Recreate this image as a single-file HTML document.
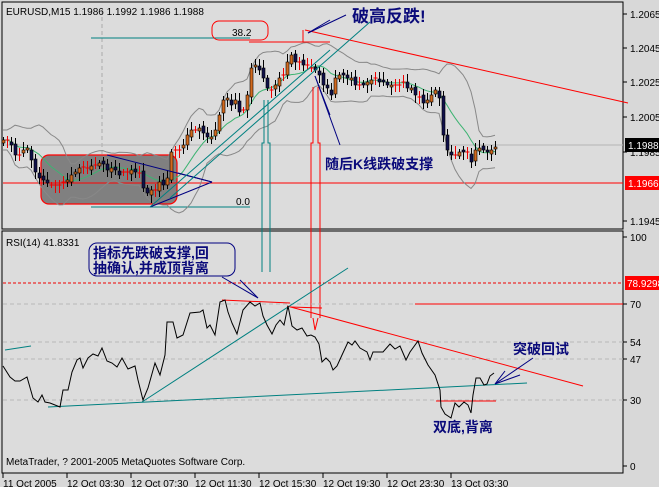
<!DOCTYPE html>
<html><head><meta charset="utf-8"><style>
html,body{margin:0;padding:0;background:#d8d8d8;}
svg{display:block;font-family:"Liberation Sans","Noto Sans CJK SC",sans-serif;}
.ax{font-size:10px;fill:#000;}
.cn{font-family:"Liberation Sans","Noto Sans CJK SC",sans-serif;font-weight:bold;fill:#0a0a7a;}
</style></head><body>
<svg id="s" width="659" height="487" viewBox="0 0 659 487" xmlns="http://www.w3.org/2000/svg">
<rect width="659" height="487" fill="#d8d8d8"/>
<rect x="2" y="2" width="621" height="227" fill="#dcdcdc" stroke="#000" stroke-width="1"/>
<rect x="2" y="231" width="621" height="242" fill="#dcdcdc" stroke="#000" stroke-width="1"/>
<g stroke="#000">
<line x1="623" y1="14" x2="627" y2="14"/><line x1="623" y1="48" x2="627" y2="48"/><line x1="623" y1="82" x2="627" y2="82"/><line x1="623" y1="117" x2="627" y2="117"/><line x1="623" y1="152" x2="627" y2="152"/><line x1="623" y1="221" x2="627" y2="221"/>
<line x1="623" y1="237" x2="627" y2="237"/><line x1="623" y1="304" x2="627" y2="304"/><line x1="623" y1="342" x2="627" y2="342"/><line x1="623" y1="359" x2="627" y2="359"/><line x1="623" y1="400" x2="627" y2="400"/><line x1="623" y1="466" x2="627" y2="466"/>
<line x1="3" y1="473" x2="3" y2="478"/><line x1="67" y1="473" x2="67" y2="478"/><line x1="131" y1="473" x2="131" y2="478"/><line x1="195" y1="473" x2="195" y2="478"/><line x1="259" y1="473" x2="259" y2="478"/><line x1="323" y1="473" x2="323" y2="478"/><line x1="387" y1="473" x2="387" y2="478"/><line x1="451" y1="473" x2="451" y2="478"/>
</g>
<g class="ax">
<text x="630" y="18">1.2065</text><text x="630" y="52">1.2045</text><text x="630" y="86">1.2025</text><text x="630" y="121">1.2005</text><text x="630" y="156">1.1985</text><text x="630" y="225">1.1945</text>
<text x="630" y="241">100</text><text x="630" y="308">70</text><text x="630" y="346">54</text><text x="630" y="363">47</text><text x="630" y="404">30</text><text x="630" y="470">0</text>
<text x="3" y="487">11 Oct 2005</text><text x="67" y="487">12 Oct 03:30</text><text x="131" y="487">12 Oct 07:30</text><text x="195" y="487">12 Oct 11:30</text><text x="259" y="487">12 Oct 15:30</text><text x="323" y="487">12 Oct 19:30</text><text x="387" y="487">12 Oct 23:30</text><text x="451" y="487">13 Oct 03:30</text>
</g>
<line x1="102" y1="10" x2="102" y2="205" stroke="#aaa" stroke-dasharray="4,3"/>
<line x1="3" y1="145" x2="623" y2="145" stroke="#b4b4b4"/>
<rect x="41" y="155" width="136" height="49" rx="8" fill="#808080" stroke="#f00" stroke-width="1.2"/>
<line x1="3" y1="183" x2="623" y2="183" stroke="#f00"/>
<rect x="625" y="138" width="34" height="14" fill="#000"/><text x="628" y="149" class="ax" style="fill:#fff">1.1988</text>
<rect x="625" y="176" width="34" height="14" fill="#f00"/><text x="628" y="187" class="ax" style="fill:#fff">1.1966</text>
<line x1="91" y1="38" x2="250" y2="38" stroke="#008080"/>
<line x1="91" y1="207" x2="250" y2="207" stroke="#008080"/>
<rect x="212" y="21" width="56" height="19" rx="7" fill="none" stroke="#f00"/>
<text x="232" y="36" class="ax">38.2</text>
<text x="236" y="205" class="ax">0.0</text>
<text x="6" y="15" class="ax">EURUSD,M15  1.1986 1.1992 1.1986 1.1988</text>
<g id="bb" fill="none" stroke-width="1"></g>
<g id="cd"></g>
<g fill="none">
<line x1="249" y1="42" x2="330" y2="42" stroke="#f00"/>
<line x1="305" y1="30" x2="628" y2="103" stroke="#f00"/>
<line x1="303" y1="30" x2="303" y2="42" stroke="#f00"/>
<line x1="107" y1="155" x2="212" y2="182" stroke="#000080"/>
<line x1="150" y1="207" x2="212" y2="182" stroke="#000080"/>
<line x1="178" y1="173" x2="212" y2="182" stroke="#000080"/>
<line x1="150" y1="207" x2="330" y2="50" stroke="#008080"/>
<line x1="170" y1="198" x2="370" y2="22" stroke="#008080"/>
<line x1="308" y1="33" x2="346" y2="15" stroke="#000080"/>
<line x1="308" y1="33" x2="330" y2="20" stroke="#000080"/>
<line x1="315" y1="76" x2="340" y2="145" stroke="#000080"/>
<line x1="315" y1="76" x2="330" y2="115" stroke="#000080"/>
</g>
<text x="352" y="22" class="cn" font-size="17">破高反跌!</text>
<text x="325" y="169" class="cn" font-size="14">随后K线跌破支撑</text>
<g fill="none">
<polyline points="264,100 264,143 262,143 262,272" stroke="#008080"/>
<polyline points="268,100 268,143 270,143 270,272" stroke="#008080"/>
<polyline points="313,87 313,143 311,143 311,318" stroke="#f00"/>
<polyline points="318,87 318,143 320,143 320,318" stroke="#f00"/>
<polyline points="313,318 315,330 318,318" stroke="#f00"/>
</g>
<text x="6" y="246" class="ax">RSI(14) 41.8331</text>
<line x1="3" y1="283" x2="623" y2="283" stroke="#e00" stroke-dasharray="3,2"/>
<g stroke="#b8b8b8" stroke-dasharray="4,3"><line x1="3" y1="304" x2="623" y2="304"/><line x1="3" y1="342" x2="623" y2="342"/><line x1="3" y1="359" x2="623" y2="359"/><line x1="3" y1="400" x2="623" y2="400"/></g>
<rect x="625" y="276" width="34" height="14" fill="#f00"/><text x="627" y="287" class="ax" style="fill:#fff">78.9298</text>
<line x1="415" y1="304" x2="623" y2="304" stroke="#f00"/>
<g fill="none">
<line x1="222" y1="300" x2="290" y2="303" stroke="#f00"/>
<line x1="287" y1="306" x2="583" y2="386" stroke="#f00"/>
<line x1="290" y1="307" x2="322" y2="308" stroke="#f00"/>
<line x1="436" y1="401" x2="496" y2="401" stroke="#f00"/>
<line x1="48" y1="407" x2="527" y2="383" stroke="#008080"/>
<line x1="142" y1="402" x2="348" y2="268" stroke="#008080"/>
<line x1="5" y1="350" x2="31" y2="346" stroke="#008080"/>
<line x1="222" y1="277" x2="258" y2="298" stroke="#000080"/>
<line x1="240" y1="280" x2="258" y2="298" stroke="#000080"/>
<line x1="495" y1="384" x2="533" y2="358" stroke="#000080"/>
<line x1="495" y1="384" x2="520" y2="375" stroke="#000080"/>
<line x1="495" y1="384" x2="505" y2="371" stroke="#000080"/>
</g>
<polyline fill="none" stroke="#000" stroke-width="1" points="3,366 10,377 15,381 20,381 27,377 33,398 38,402 42,395 45,402 50,403 55,405 60,407 63,390 68,390 72,372 77,360 80,358 83,368 88,358 93,354 98,356 102,348 107,361 112,363 117,367 122,358 128,369 135,366 138,380 143,400 148,388 155,363 160,375 165,355 167,322 173,322 177,338 183,335 190,313 200,312 203,310 207,328 210,325 215,335 220,302 225,300 228,312 232,323 237,334 243,310 250,302 255,306 260,303 263,316 267,325 272,334 276,325 280,320 284,325 288,306 292,326 297,330 302,328 307,336 311,335 315,337 319,344 322,362 326,358 330,362 333,370 337,366 342,355 348,342 352,345 355,341 360,348 367,352 370,360 373,352 383,352 390,344 395,349 400,346 406,360 410,352 418,341 422,353 428,365 435,375 440,390 441,407 445,414 451,418 455,403 459,407 464,402 468,405 471,413 473,395 476,378 480,378 484,385 487,384 490,376 494,373"/>
<rect x="89" y="243" width="146" height="33" rx="8" fill="none" stroke="#000080"/>
<text x="93" y="258" class="cn" font-size="14">指标先跌破支撑,回</text>
<text x="93" y="273" class="cn" font-size="14">抽确认,并成顶背离</text>
<text x="513" y="354" class="cn" font-size="14">突破回试</text>
<text x="433" y="432" class="cn" font-size="14">双底,背离</text>
<text x="6" y="465" class="ax">MetaTrader, ? 2001-2005 MetaQuotes Software Corp.</text>
</svg>
<script>
var c=[[3,140],[7,140],[11,145],[15,155],[19,155],[23,150],[27,148],[31,160],[35,172],[39,178],[43,180],[47,183],[51,185],[55,185],[59,185],[63,182],[67,180],[71,175],[75,172],[79,168],[83,167],[87,168],[91,166],[95,165],[99,163],[103,164],[107,170],[111,168],[115,170],[119,175],[123,172],[127,172],[131,170],[135,172],[139,173],[143,188],[147,193],[151,190],[155,190],[159,182],[163,185],[167,178],[171,152],[175,150],[179,150],[183,145],[187,135],[191,130],[195,130],[199,128],[203,133],[207,137],[211,137],[215,130],[219,115],[223,100],[227,98],[231,105],[235,100],[239,112],[243,110],[247,95],[251,68],[255,65],[259,70],[263,78],[267,88],[271,90],[275,85],[279,78],[283,75],[287,62],[291,55],[295,62],[299,62],[303,65],[307,65],[311,68],[315,70],[319,75],[323,85],[327,88],[331,95],[335,78],[339,75],[343,75],[347,78],[351,78],[355,85],[359,85],[363,85],[367,82],[371,80],[375,78],[379,82],[383,82],[387,85],[391,85],[395,85],[399,85],[403,82],[407,88],[411,88],[415,95],[419,97],[423,103],[427,100],[431,95],[435,90],[439,98],[443,135],[447,150],[451,155],[455,155],[459,152],[463,152],[467,152],[471,162],[475,150],[479,148],[483,150],[487,152],[491,150],[495,147]];
var ns="http://www.w3.org/2000/svg",g=document.getElementById('cd'),bb=document.getElementById('bb');
function el(t,a,p){var e=document.createElementNS(ns,t);for(var k in a)e.setAttribute(k,a[k]);p.appendChild(e);return e;}
var ma=[],up=[],lo=[];
for(var i=0;i<c.length;i++){var x=c[i][0],cl=c[i][1],op=i?c[i-1][1]+((i*7)%5-2):cl+3;
 var t=Math.min(op,cl)-3-(i*13%6),b=Math.max(op,cl)+3+(i*11%6);
 el('line',{x1:x+.5,y1:t,x2:x+.5,y2:b,stroke:'#000'},g);
 var h=Math.abs(op-cl);
 if(h<2){el('line',{x1:x-1.5,y1:cl,x2:x+2.5,y2:cl,stroke:'#e00'},g);el('line',{x1:x+.5,y1:t,x2:x+.5,y2:b,stroke:'#e00'},g);}
 else el('rect',{x:x-1,y:Math.min(op,cl),width:3,height:h,fill:cl<op?'#d2691e':'#10104a',stroke:'#000','stroke-width':.6},g);
 var s=0,n=0;for(var j=Math.max(0,i-9);j<=i;j++){s+=c[j][1];n++;}var m=s/n;var v=0;for(j=Math.max(0,i-9);j<=i;j++)v+=(c[j][1]-m)*(c[j][1]-m);var sd=Math.sqrt(v/n)*1.6+10;
 ma.push(x+','+m);up.push(x+','+(m-sd));lo.push(x+','+(m+sd));}
el('polyline',{points:up.join(' '),stroke:'#888',fill:'none'},bb);
el('polyline',{points:lo.join(' '),stroke:'#888',fill:'none'},bb);
el('polyline',{points:ma.join(' '),stroke:'#3cb371',fill:'none'},bb);
</script>
</body></html>
